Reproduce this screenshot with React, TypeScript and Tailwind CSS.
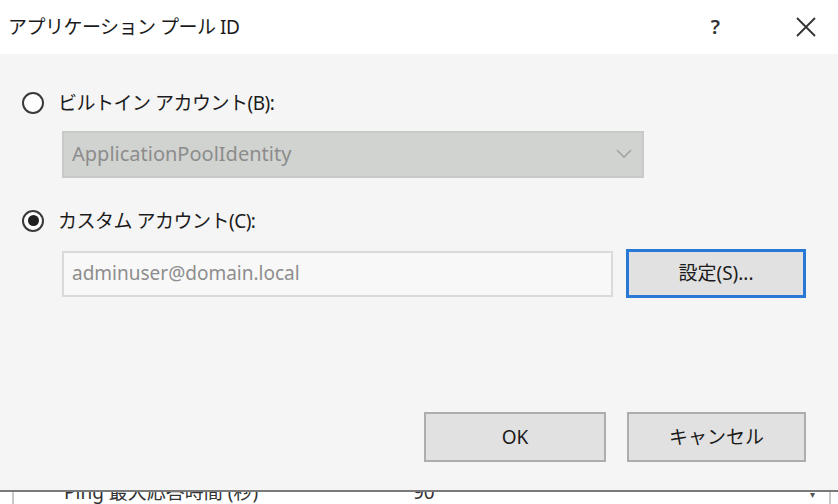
import React from "react";

// Application pool identity dialog (IIS style), scaled Windows chrome

const FONT = "font-['Noto_Sans','Noto_Sans_CJK_JP',sans-serif]";

function Radio({ checked }: { checked?: boolean }) {
  return (
    <span className="flex h-[22px] w-[22px] items-center justify-center rounded-full border-2 border-[#3a3a3a] bg-white">
      {checked && <span className="h-[11px] w-[11px] rounded-full bg-[#1f1f1f]" />}
    </span>
  );
}

function Button({ children, focused }: { children: React.ReactNode; focused?: boolean }) {
  return (
    <div
      className={
        focused
          ? "flex items-center justify-center border-[3px] border-[#2a78d6] bg-[#e1e1e1] text-[19px] text-[#1b1b1b]"
          : "flex items-center justify-center border-2 border-[#adadad] bg-[#e1e1e1] text-[19px] text-[#1b1b1b]"
      }
    >
      {children}
    </div>
  );
}

export default function App() {
  return (
    <div className={`flex h-[504px] w-[838px] flex-col overflow-hidden bg-[#f5f5f5] ${FONT}`}>
      {/* Title bar */}
      <div className="flex h-[54px] shrink-0 items-center bg-white">
        <span className="pl-[8px] text-[19px] tracking-[-0.5px] text-[#1b1b1b]">アプリケーション プール ID</span>
        <span className="ml-auto mr-[76px] text-[20px] font-semibold text-[#333]">?</span>
        <svg width="20" height="20" viewBox="0 0 20 20" className="mr-[22px]">
          <path d="M1 1 L19 19 M19 1 L1 19" stroke="#333" strokeWidth="1.8" />
        </svg>
      </div>

      {/* Body */}
      <div className="flex flex-1 flex-col pl-[22px] pr-[32px] text-[#1b1b1b]">
        <div className="mt-[35px] flex items-center gap-[14px]">
          <Radio />
          <span className="text-[19px] tracking-[-0.5px]">ビルトイン アカウント(B):</span>
        </div>

        <div className="ml-[40px] mt-[13px] flex h-[47px] w-[582px] items-center border-2 border-[#c8cac8] bg-[#d1d3d0] pl-[8px] pr-[10px]">
          <span className="text-[20px] text-[#8c8c8c]">ApplicationPoolIdentity</span>
          <svg width="16" height="10" viewBox="0 0 16 10" className="ml-auto">
            <path d="M1 1 L8 8 L15 1" fill="none" stroke="#a3a5a3" strokeWidth="1.6" />
          </svg>
        </div>

        <div className="mt-[29px] flex items-center gap-[14px]">
          <Radio checked />
          <span className="text-[19px] tracking-[-0.5px]">カスタム アカウント(C):</span>
        </div>

        <div className="ml-[40px] mt-[14px] flex items-center gap-[13px]">
          <div className="flex h-[46px] w-[551px] items-center border-2 border-[#dadada] bg-[#f8f8f8] pl-[8px]">
            <span className="text-[19px] text-[#8d8d8d]">adminuser@domain.local</span>
          </div>
          <div className="h-[49px] w-[180px]">
            <Button focused>
              <span className="flex h-[43px] items-center">設定(S)...</span>
            </Button>
          </div>
        </div>

        <div className="mt-auto mb-[28px] flex justify-end gap-[21px]">
          <div className="h-[50px] w-[182px]">
            <Button>
              <span className="flex h-[46px] items-center">OK</span>
            </Button>
          </div>
          <div className="h-[50px] w-[179px]">
            <Button>
              <span className="flex h-[46px] items-center">キャンセル</span>
            </Button>
          </div>
        </div>
      </div>

      {/* Partially visible list underneath, covered by the dialog */}
      <div className="relative h-[14px] shrink-0 overflow-hidden border-t-2 border-[#7a7a7a] bg-white">
        <div className="absolute left-[12px] top-0 h-full w-[2px] bg-[#c8c8c8]" />
        <span className="absolute left-[64px] top-[-13px] text-[19px] leading-[26px] text-[#333]">Ping 最大応答時間 (秒)</span>
        <span className="absolute left-[413px] top-[-13px] text-[19px] leading-[26px] text-[#333]">90</span>
        <span className="absolute left-[810px] top-[-4px] text-[10px] leading-[12px] text-[#555]">▾</span>
        <div className="absolute left-[829px] top-0 h-full w-[2px] bg-[#c8c8c8]" />
      </div>
    </div>
  );
}
